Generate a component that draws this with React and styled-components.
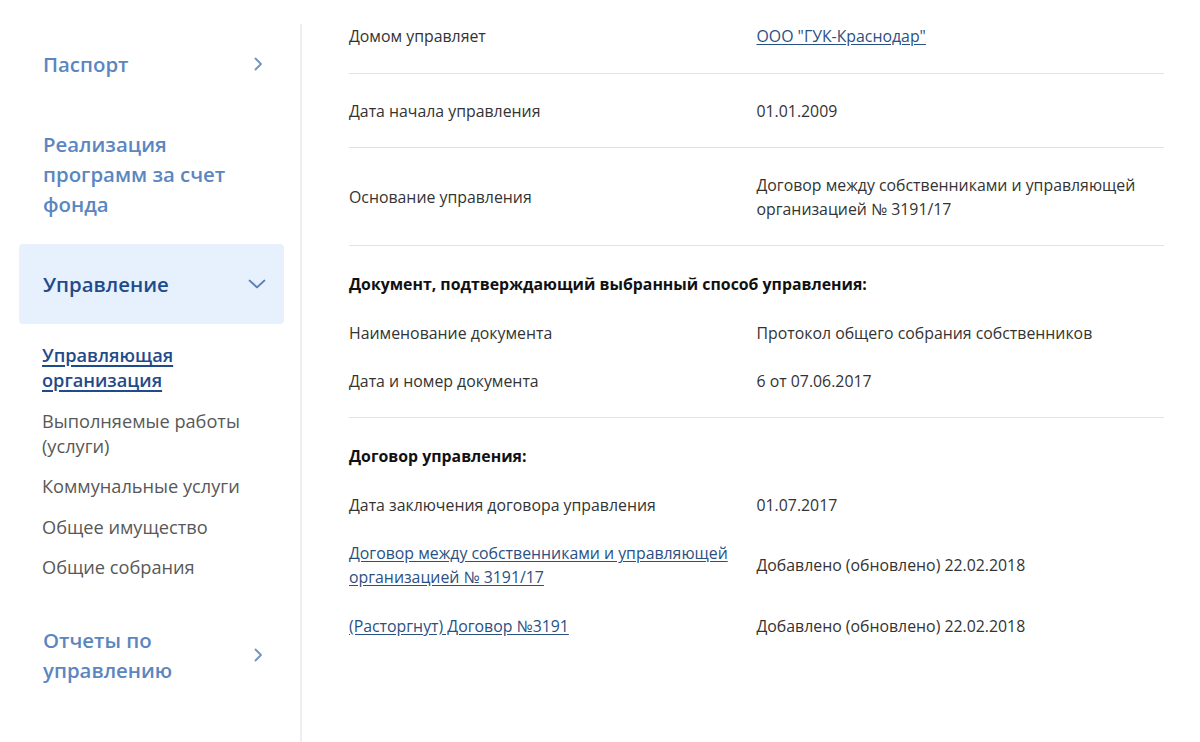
import React from "react";
import styled, { createGlobalStyle } from "styled-components";

const Global = createGlobalStyle`
  html, body { margin: 0; padding: 0; background: #fff; }
  body { font-family: "Open Sans", "Noto Sans", sans-serif; }
  * { box-sizing: border-box; }
`;

const Page = styled.div`
  display: flex;
  align-items: flex-start;
  width: 1200px;
  min-height: 742px;
`;

const Sidebar = styled.nav`
  width: 302px;
  flex: none;
  margin-top: 24px;
  min-height: 718px;
  padding: 0 16px 0 19px;
  border-right: 2px solid #efefef;
  display: flex;
  flex-direction: column;
`;

const NavItem = styled.a`
  display: flex;
  align-items: center;
  justify-content: space-between;
  padding: 25px 18px 25px 24px;
  border-radius: 4px;
  background: ${(p) => (p.$active ? "#e6f1fd" : "transparent")};
  color: ${(p) => (p.$active ? "#1f4b8b" : "#5b86bf")};
  font-size: 20.4px;
  font-weight: 600;
  line-height: 30px;
  text-decoration: none;
  cursor: pointer;
`;

const NavLabel = styled.span`
  max-width: 200px;
`;

const Chevron = styled.svg`
  flex: none;
  width: ${(p) => (p.$down ? "18px" : "16px")};
  height: ${(p) => (p.$down ? "18px" : "16px")};
  color: ${(p) => (p.$active ? "#5a7fb5" : "#6f93c6")};
`;

const SubList = styled.ul`
  list-style: none;
  margin: 0;
  padding: 19px 0 20px 23px;
  display: flex;
  flex-direction: column;
  gap: 15.5px;
`;

const SubItem = styled.li`
  font-size: 18.2px;
  line-height: 25px;
  color: ${(p) => (p.$active ? "#1f4b8b" : "#585858")};
  font-weight: ${(p) => (p.$active ? 600 : 400)};
  text-decoration: ${(p) => (p.$active ? "underline" : "none")};
  text-underline-offset: 3px;
  text-decoration-thickness: 2px;
  max-width: 215px;
`;

const Main = styled.main`
  flex: 1;
  padding: 0 36px 0 47px;
  color: #333;
  font-size: 15.85px;
  line-height: 24px;
`;

const Row = styled.div`
  display: grid;
  grid-template-columns: 50% 50%;
  align-items: center;
  padding: ${(p) => (p.$first ? "24px 0 25px" : "25px 0 24px")};
  border-bottom: 1px solid #e2e2e2;
`;

const Section = styled.section`
  padding: 26px 0 24px;
  border-bottom: ${(p) => (p.$last ? "none" : "1px solid #e2e2e2")};
  display: flex;
  flex-direction: column;
  gap: 24.5px;
`;

const Heading = styled.h3`
  margin: 0;
  font-size: 15.85px;
  line-height: 24px;
  font-weight: 700;
  color: #111;
`;

const SubRow = styled.div`
  display: grid;
  grid-template-columns: 50% 50%;
  align-items: center;
`;

const Cell = styled.div`
  padding-right: ${(p) => (p.$pr ? p.$pr : "0")};
`;

const Link = styled.a`
  color: #2a5082;
  text-decoration: underline;
  text-underline-offset: 2px;
  cursor: pointer;
`;

const RightIcon = ({ active }) => (
  <Chevron $active={active} viewBox="0 0 16 16" fill="none">
    <path d="M5.5 2.5 L11 8 L5.5 13.5" stroke="currentColor" strokeWidth="1.8" strokeLinecap="round" strokeLinejoin="round" />
  </Chevron>
);

const DownIcon = ({ active }) => (
  <Chevron $active={active} $down viewBox="0 0 16 16" fill="none">
    <path d="M1.5 5 L8 11 L14.5 5" stroke="currentColor" strokeWidth="1.8" strokeLinecap="round" strokeLinejoin="round" />
  </Chevron>
);

export default function App() {
  return (
    <>
      <Global />
      <Page>
        <Sidebar>
          <NavItem>
            <NavLabel>Паспорт</NavLabel>
            <RightIcon />
          </NavItem>
          <NavItem>
            <NavLabel>Реализация программ за счет фонда</NavLabel>
          </NavItem>
          <NavItem $active>
            <NavLabel>Управление</NavLabel>
            <DownIcon active />
          </NavItem>
          <SubList>
            <SubItem $active>Управляющая организация</SubItem>
            <SubItem>Выполняемые работы (услуги)</SubItem>
            <SubItem>Коммунальные услуги</SubItem>
            <SubItem>Общее имущество</SubItem>
            <SubItem>Общие собрания</SubItem>
          </SubList>
          <NavItem>
            <NavLabel>Отчеты по управлению</NavLabel>
            <RightIcon />
          </NavItem>
        </Sidebar>
        <Main>
          <Row $first>
            <Cell>Домом управляет</Cell>
            <Cell><Link>ООО "ГУК-Краснодар"</Link></Cell>
          </Row>
          <Row>
            <Cell>Дата начала управления</Cell>
            <Cell>01.01.2009</Cell>
          </Row>
          <Row>
            <Cell>Основание управления</Cell>
            <Cell>Договор между собственниками и управляющей организацией № 3191/17</Cell>
          </Row>
          <Section>
            <Heading>Документ, подтверждающий выбранный способ управления:</Heading>
            <SubRow>
              <Cell>Наименование документа</Cell>
              <Cell>Протокол общего собрания собственников</Cell>
            </SubRow>
            <SubRow>
              <Cell>Дата и номер документа</Cell>
              <Cell>6 от 07.06.2017</Cell>
            </SubRow>
          </Section>
          <Section $last>
            <Heading>Договор управления:</Heading>
            <SubRow>
              <Cell>Дата заключения договора управления</Cell>
              <Cell>01.07.2017</Cell>
            </SubRow>
            <SubRow>
              <Cell $pr="20px"><Link>Договор между собственниками и управляющей организацией № 3191/17</Link></Cell>
              <Cell>Добавлено (обновлено) 22.02.2018</Cell>
            </SubRow>
            <SubRow>
              <Cell><Link>(Расторгнут) Договор №3191</Link></Cell>
              <Cell>Добавлено (обновлено) 22.02.2018</Cell>
            </SubRow>
          </Section>
        </Main>
      </Page>
    </>
  );
}
